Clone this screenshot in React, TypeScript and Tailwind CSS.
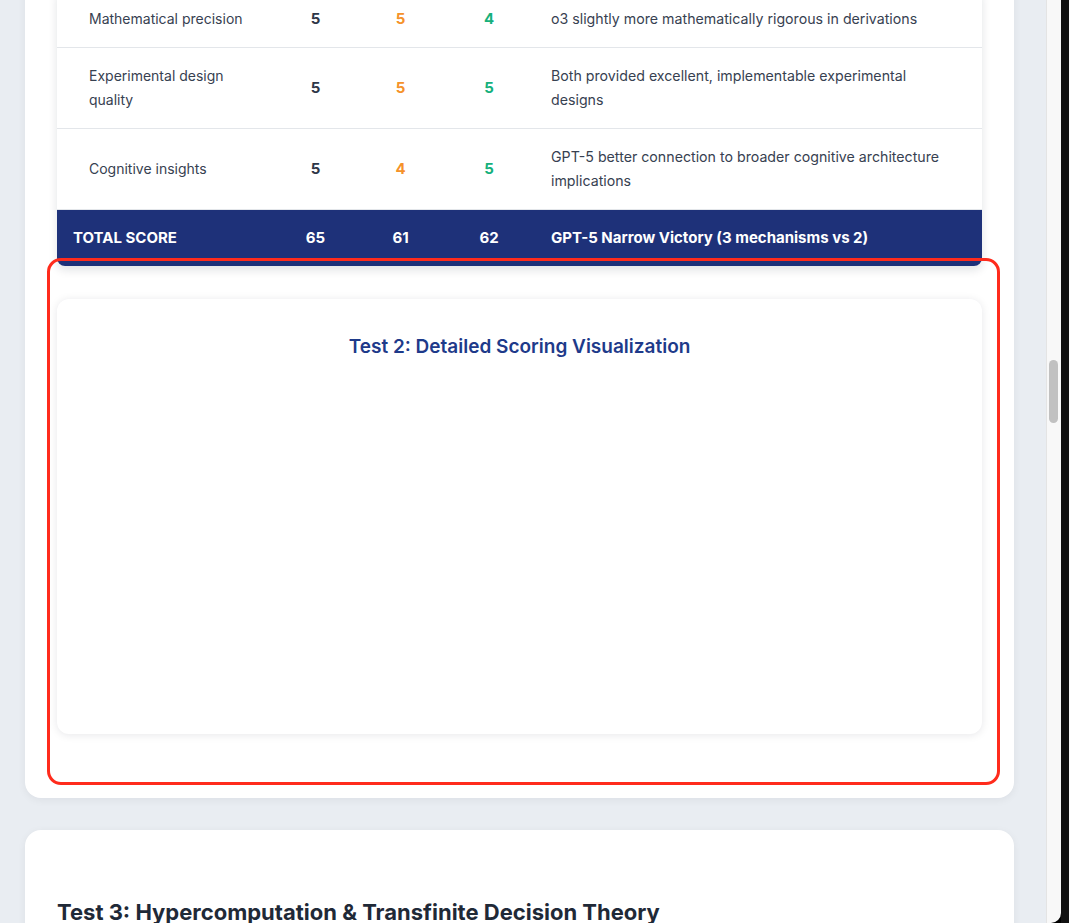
import React from "react";

type Row = { c: string; a: string; b: string; d: string; note: string };

const rows: Row[] = [
  { c: "Mathematical precision", a: "5", b: "5", d: "4", note: "o3 slightly more mathematically rigorous in derivations" },
  { c: "Experimental design quality", a: "5", b: "5", d: "5", note: "Both provided excellent, implementable experimental designs" },
  { c: "Cognitive insights", a: "5", b: "4", d: "5", note: "GPT-5 better connection to broader cognitive architecture implications" },
];

const grid = "grid grid-cols-[216px_85px_85px_92px_1fr]";

export default function App() {
  return (
    <div
      className="flex h-[923px] w-[1069px] overflow-hidden bg-black"
      style={{ fontFamily: "Inter, 'Noto Sans', 'Liberation Sans', sans-serif" }}
    >
      <div className="relative h-full w-[1046px] overflow-hidden bg-[#e9edf2]">
        <div className="-mt-[9px] ml-[25px] w-[989px] rounded-b-2xl bg-white px-8 pb-8 shadow-[0_2px_8px_rgba(15,23,42,0.06)]">
          <div className="overflow-hidden rounded-b-lg shadow-[0_4px_10px_rgba(15,23,42,0.12)]">
            {rows.map((r) => (
              <div key={r.c} className={`${grid} border-b border-[#e3e6ea] bg-white text-[14px] leading-[24px]`}>
                <div className="flex items-center py-4 pl-8 pr-4 text-[#374151]">{r.c}</div>
                <div className="flex items-center justify-center py-4 text-[15px] font-bold text-[#2d3748]">{r.a}</div>
                <div className="flex items-center justify-center py-4 text-[15px] font-bold text-[#f5922a]">{r.b}</div>
                <div className="flex items-center justify-center py-4 text-[15px] font-bold text-[#16b07c]">{r.d}</div>
                <div className="flex items-center py-4 pl-4 pr-[30px] text-[14.2px] text-[#374151]">{r.note}</div>
              </div>
            ))}
            <div className={`${grid} bg-[#1e3179] text-[15px] font-bold leading-[24px] text-white`}>
              <div className="py-4 pl-4">TOTAL SCORE</div>
              <div className="py-4 text-center">65</div>
              <div className="py-4 text-center">61</div>
              <div className="py-4 text-center">62</div>
              <div className="py-4 pl-4">GPT-5 Narrow Victory (3 mechanisms vs 2)</div>
            </div>
          </div>

          <div className="mb-8 mt-[33px] h-[435px] rounded-xl bg-white pt-[36px] shadow-[0_1px_8px_rgba(15,23,42,0.10)]">
            <h3 className="text-center text-[19px] font-semibold leading-[24px] text-[#1e3a8a]">
              Test 2: Detailed Scoring Visualization
            </h3>
          </div>
        </div>

        <div className="ml-[25px] mt-8 h-[200px] w-[989px] rounded-2xl bg-white px-8 pt-[67px] shadow-[0_2px_8px_rgba(15,23,42,0.06)]">
          <h2 className="text-[22px] font-bold leading-[30px] text-[#1f2937]">
            Test 3: Hypercomputation &amp; Transfinite Decision Theory
          </h2>
        </div>

        <div className="pointer-events-none absolute left-[47px] top-[258px] h-[527px] w-[953px] rounded-[14px] border-[3px] border-[#ff2b1c]" />
      </div>

      <div className="relative h-full w-[15px] rounded-br-[10px] border-l border-[#e4e4e4] bg-[#f8f8f8]">
        <div className="absolute left-[2px] top-[360px] h-[63px] w-[9px] rounded-full bg-[#c1c1c1]" />
      </div>
      <div className="h-full w-[8px] bg-[#111111]" />
    </div>
  );
}
